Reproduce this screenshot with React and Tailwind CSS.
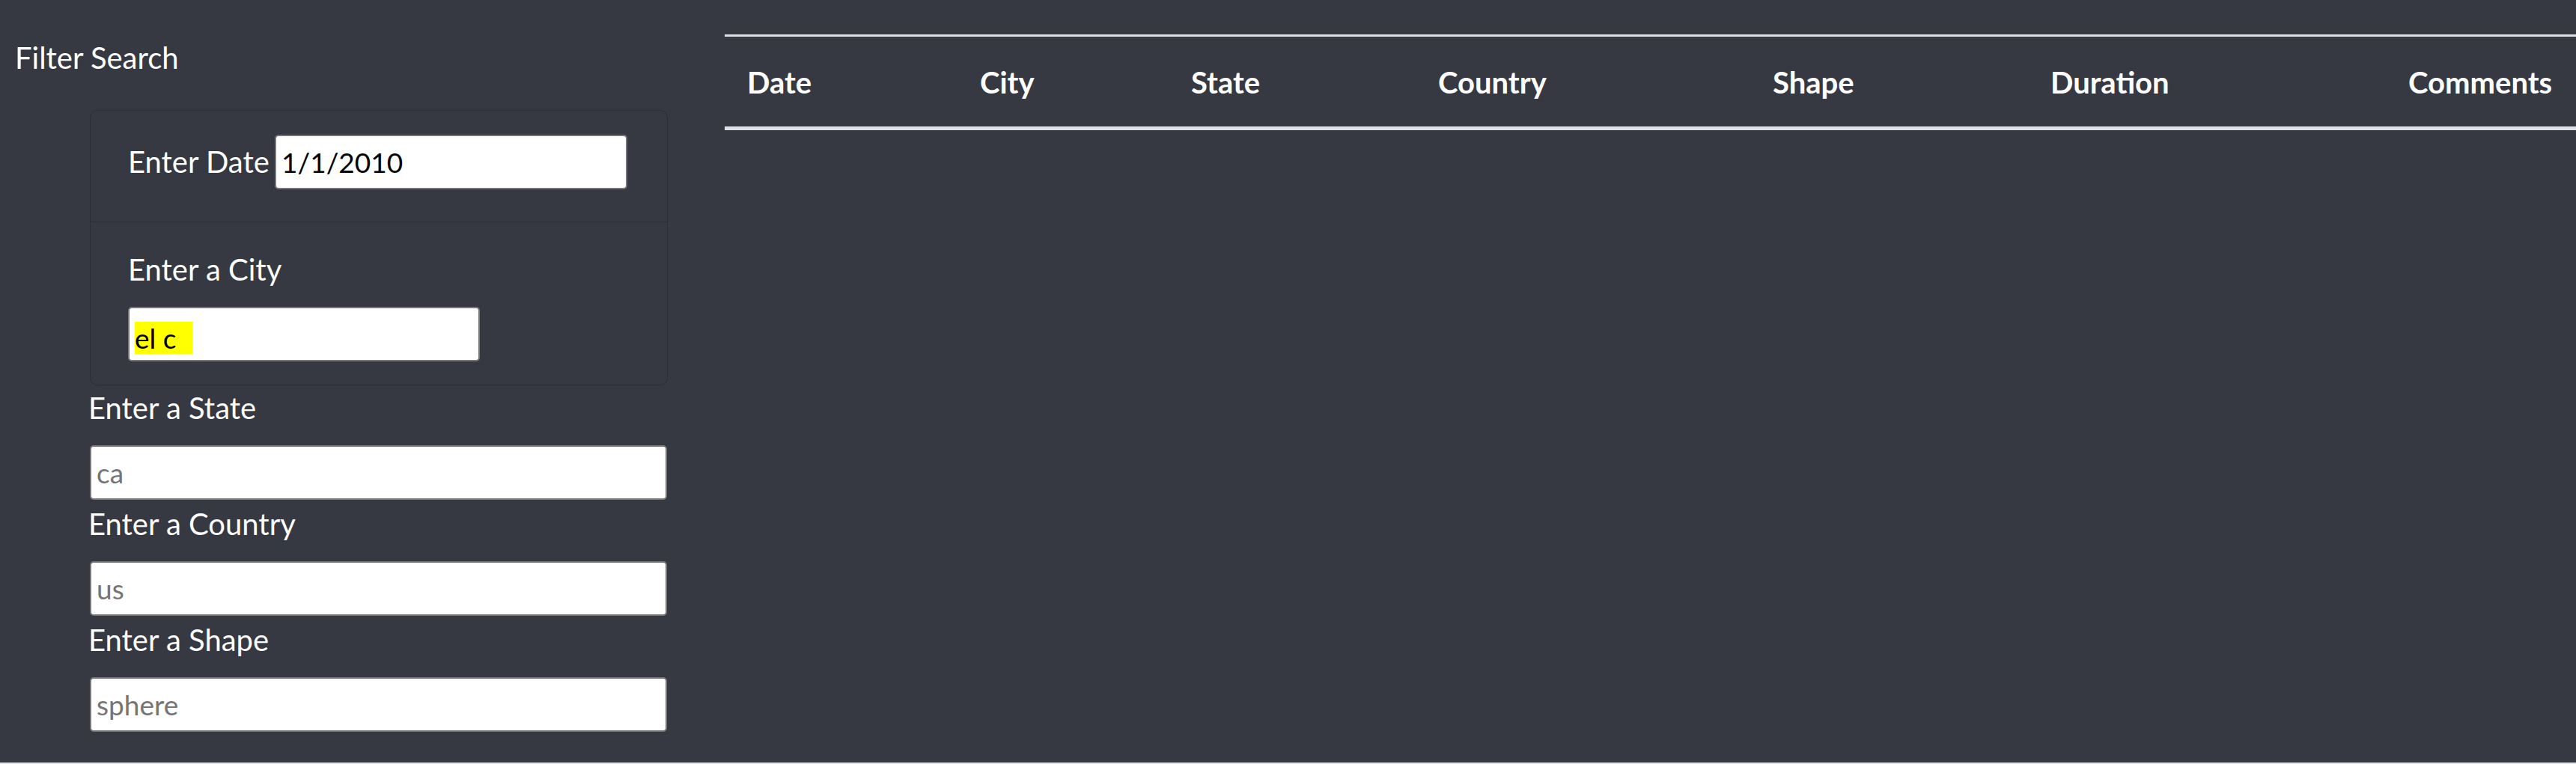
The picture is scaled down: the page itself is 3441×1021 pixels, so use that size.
import React from "react";

const inputCls =
  "block h-[73px] bg-white text-black border-2 border-[#767676] rounded-[5px] pl-[7px] text-[37px] font-['Lato',sans-serif] outline-none placeholder:text-[#757575]";

const groups = [
  { label: "Enter a State", placeholder: "ca" },
  { label: "Enter a Country", placeholder: "us" },
  { label: "Enter a Shape", placeholder: "sphere" },
];

const cols = [
  { name: "Date", cls: "w-[311px]" },
  { name: "City", cls: "w-[282px]" },
  { name: "State", cls: "w-[330px]" },
  { name: "Country", cls: "w-[447px]" },
  { name: "Shape", cls: "w-[371px]" },
  { name: "Duration", cls: "w-[478px]" },
  { name: "Comments", cls: "w-[262px]" },
];

export default function App() {
  return (
    <div className="w-[3441px] h-[1021px] overflow-hidden bg-[#dee2e6] font-['Lato',sans-serif]">
      <div className="h-[1019px] bg-[#363941] flex text-white">
        <aside className="w-[968px] shrink-0 pl-[20px] pt-[47px]">
          <h2 className="text-[40px] leading-[60px] font-normal">Filter Search</h2>

          <div className="ml-[100px] mt-[40px] w-[772px] border border-[#2b2e35] rounded-[10px]">
            <div className="flex items-baseline pl-[50px] pt-[32px] pb-[43px] border-b border-[#2b2e35]">
              <label className="w-[196px] shrink-0 text-[40px] leading-[60px]">Enter Date</label>
              <input className={inputCls + " w-[471px]"} defaultValue="1/1/2010" />
            </div>
            <div className="pl-[50px] pt-[33px] pb-[31px]">
              <label className="block text-[40px] leading-[60px]">Enter a City</label>
              <div className="mt-[20px] w-[470px] h-[73px] bg-white border-2 border-[#767676] rounded-[5px] flex items-center pl-[7px] pt-[10px]">
                <span className="bg-[#ffff00] text-black text-[37px] leading-[43px] pr-[22px]">el c</span>
              </div>
            </div>
          </div>

          {groups.map((g) => (
            <div key={g.label} className="mb-[2px]">
              <label className="block ml-[98px] text-[40px] leading-[60px]">{g.label}</label>
              <input className={inputCls + " ml-[100px] mt-[20px] w-[771px]"} placeholder={g.placeholder} />
            </div>
          ))}
        </aside>

        <div className="flex-1 pt-[46px]">
          <table className="table-fixed border-collapse w-[2481px]">
            <thead>
              <tr>
                {cols.map((c) => (
                  <th
                    key={c.name}
                    className={
                      c.cls +
                      " text-left font-bold text-[40px] leading-[60px] pl-[30px] pt-[31px] pb-[29px] border-t-[3px] border-b-[5px] border-[#dee2e6] text-white"
                    }
                  >
                    {c.name}
                  </th>
                ))}
              </tr>
            </thead>
            <tbody />
          </table>
        </div>
      </div>
    </div>
  );
}
